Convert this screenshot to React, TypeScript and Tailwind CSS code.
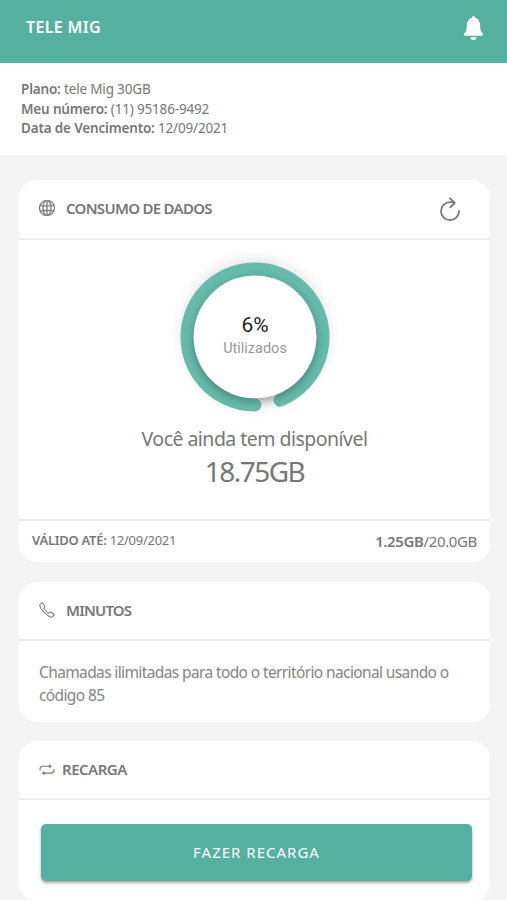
import React from 'react';
import { IoIosNotifications } from 'react-icons/io';
import { SlGlobe, SlPhone } from 'react-icons/sl';

const RefreshIcon = () => (
  <svg viewBox="0 0 28 28" className="mt-[3px] h-[28px] w-[28px]" fill="none" stroke="currentColor" strokeWidth="1.8" strokeLinecap="round" strokeLinejoin="round">
    <path d="M23 14A9 9 0 1 1 14 5.2C15.8 5 17 5.2 18.4 5.6" />
    <path d="M14 1.3L18.8 5.8L14.2 10.4" />
  </svg>
);

const LoopIcon = () => (
  <svg viewBox="0 0 16 16" className="h-4 w-4" fill="none" stroke="currentColor" strokeWidth="1.1">
    <path d="M1 8.4V7.2C1 5.2 2.3 4.3 4 4.3H11M15 6.9V8.2C15 10.2 13.6 11.1 12 11.1H5" />
    <path d="M10.2 2.1L12.8 4.3L10.2 6.5ZM5.4 8.9L2.8 11.1L5.4 13.3Z" fill="currentColor" stroke="none" />
  </svg>
);

const UsageRing = ({ percent }: { percent: number }) => {
  const radius = 68;
  const angle = (percent / 100) * 2 * Math.PI;
  const startX = 100 + radius * Math.sin(angle);
  const startY = 100 + radius * Math.cos(angle);

  return (
    <div className="grid h-[200px] w-[200px] place-items-center">
      <svg viewBox="0 0 200 200" className="col-start-1 row-start-1 h-full w-full">
        <defs>
          <filter id="glow" x="-20%" y="-20%" width="140%" height="140%">
            <feGaussianBlur stdDeviation="7" />
          </filter>
          <filter id="drop" x="-20%" y="-20%" width="140%" height="140%">
            <feGaussianBlur stdDeviation="4" />
          </filter>
        </defs>
        <circle cx="100" cy="96" r="73" fill="#000" opacity="0.12" filter="url(#glow)" />
        <path
          d={`M${startX} ${startY}A${radius} ${radius} 0 1 0 100 168`}
          fill="none"
          stroke="#65baaa"
          strokeWidth="13"
          strokeLinecap="round"
        />
        <circle cx="100" cy="103" r="61" fill="#000" opacity="0.32" filter="url(#drop)" />
        <circle cx="100" cy="100" r="61.3" fill="#fff" />
      </svg>
      <div className="z-10 col-start-1 row-start-1 flex flex-col items-center font-[Roboto,sans-serif]">
        <span className="text-[21px] leading-6 text-[#222]">{percent}%</span>
        <span className="text-[14.5px] leading-6 text-[#999]">Utilizados</span>
      </div>
    </div>
  );
};

const App = () => {
  return (
    <div className="h-[900px] w-full overflow-hidden bg-[#f4f4f4] font-['Noto_Sans',sans-serif] text-[#777]">
      <header className="flex h-[63px] items-start justify-between bg-[#56b0a0] pl-[26px] pr-[18px] text-white">
        <h1 className="mt-[15px] text-[16px] leading-6 font-semibold tracking-[0.35px]">TELE MIG</h1>
        <IoIosNotifications className="mt-[11px] h-[34px] w-[31px]" />
      </header>

      <section className="h-[92px] bg-white pt-[17px] pl-[21px] text-[13.5px] leading-[19.5px] tracking-[-0.17px]">
        <p><b className="font-semibold">Plano:</b> tele Mig 30GB</p>
        <p><b className="font-semibold">Meu número:</b> (11) 95186-9492</p>
        <p><b className="font-semibold">Data de Vencimento:</b> 12/09/2021</p>
      </section>

      <main className="flex flex-col gap-[20px] pt-[25px] pr-[17px] pl-[19px]">
        <section className="h-[382px] rounded-[18px] bg-white">
          <div className="flex h-[60px] items-center border-b-2 border-[#ececec] pl-5 pr-[26px]">
            <SlGlobe className="-mt-[2px] h-4 w-4 stroke-current stroke-[20]" />
            <h2 className="-mt-[2px] ml-[11px] flex-1 text-[15px] font-semibold tracking-[-0.7px]">CONSUMO DE DADOS</h2>
            <RefreshIcon />
          </div>
          <div className="flex h-[279px] flex-col items-center">
            <div className="-mt-[3px] ml-px h-[188px]">
              <UsageRing percent={6} />
            </div>
            <p className="text-[19.5px] leading-[28px] tracking-[-0.53px]">Você ainda tem disponível</p>
            <p className="text-[28px] leading-9 tracking-[-1.5px]">18.75GB</p>
          </div>
          <div className="flex h-[43px] items-center justify-between border-t-2 border-[#ececec] px-[13px]">
            <p className="-mt-[2px] text-[13px] tracking-[-0.27px]"><b className="font-semibold">VÁLIDO ATÉ:</b> 12/09/2021</p>
            <p className="text-[15px] tracking-[-0.37px]"><b className="font-semibold">1.25GB</b>/20.0GB</p>
          </div>
        </section>

        <section className="h-[140px] rounded-[18px] bg-white">
          <div className="flex h-[59px] items-center border-b-2 border-[#ececec] pl-5">
            <SlPhone className="-mt-[2px] h-4 w-4" />
            <h2 className="ml-[11px] text-[15px] font-semibold tracking-[-0.8px]">MINUTOS</h2>
          </div>
          <p className="pt-[20px] pl-[20px] text-[15.5px] leading-[23px] tracking-[-0.62px] whitespace-nowrap text-[#858585]">
            Chamadas ilimitadas para todo o território nacional usando o<br />código 85
          </p>
        </section>

        <section className="-mt-[1px] h-[160px] rounded-[18px] bg-white">
          <div className="flex h-[59px] items-center border-b-2 border-[#ececec] pl-5">
            <LoopIcon />
            <h2 className="ml-[7px] text-[15px] font-semibold tracking-[-0.5px]">RECARGA</h2>
          </div>
          <button className="mt-[24px] ml-[22px] h-[57px] w-[431px] rounded-[5px] bg-[#56b0a0] text-[15px] tracking-[1px] text-white shadow-[0_2px_3px_rgba(0,0,0,0.35)]">
            FAZER RECARGA
          </button>
        </section>
      </main>
    </div>
  );
};

export default App;
